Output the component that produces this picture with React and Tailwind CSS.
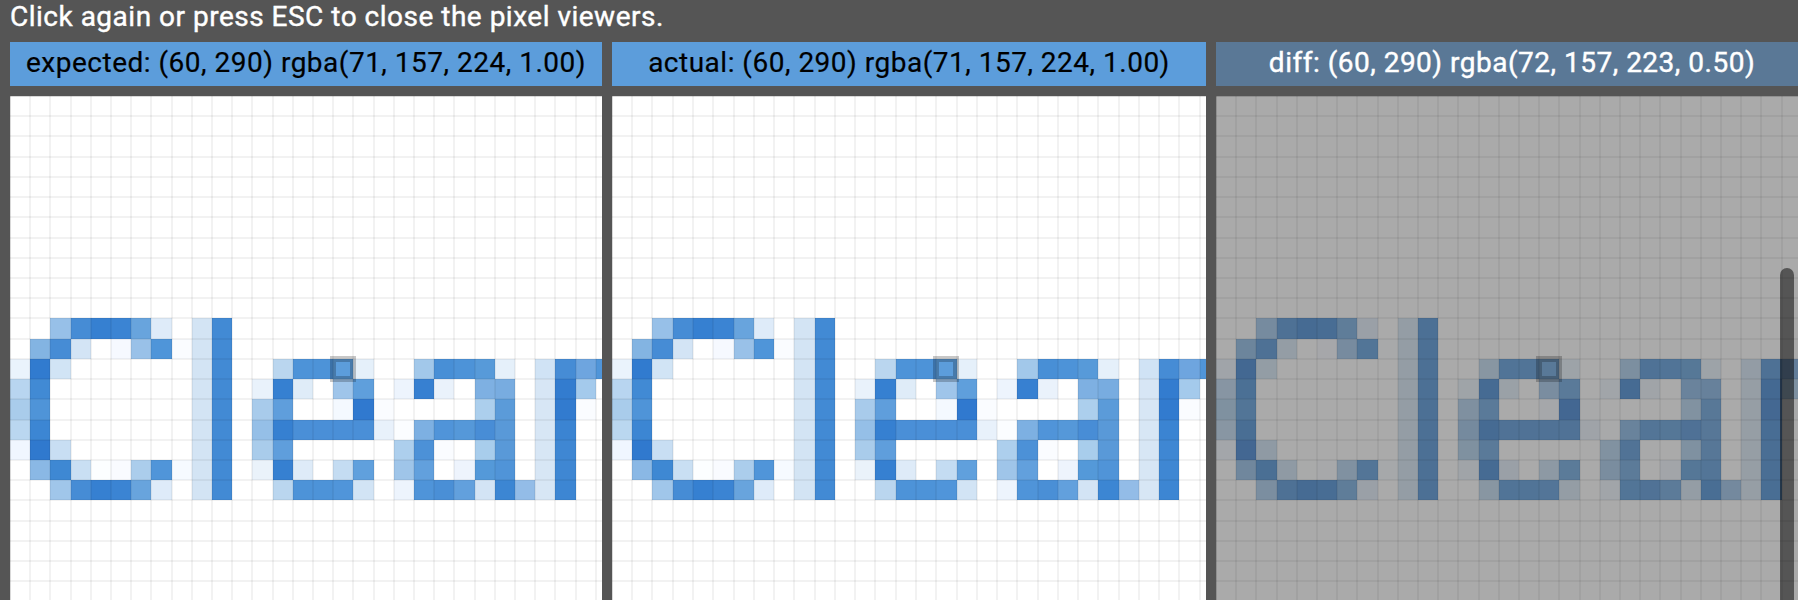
const X1 = [0,20,40,61,81,101,121,141,162,182,202,222,242,263,283,303,323,343,364,384,404,424,444,465,485,505,525,545,566,586,606];
const X2 = [0,20,40,61,81,101,122,142,162,182,203,223,243,263,284,304,324,345,365,385,405,426,446,466,486,507,527,547,567,588,608];
const X3 = [0,20,40,61,81,101,121,141,162,182,202,222,242,263,283,303,323,343,364,384,404,424,444,465,485,505,525,545,566,586,606];
const Y = Array.from({ length: 26 }, (_, i) => Math.round(i * 20.22));
const FIRST_ROW = 11;

const _ = null;
const PIXELS = [
  [_,_,'97c0e8','468cd5','3680d1','3b84d3','68a4dd','deebf9',_,'d3e4f4','428ad4'],
  [_,'83b4e2','468cd5','d3e4f5',_,'f6f9ff','99c1e8','4f95d9','fafcff','d3e4f4','428ad4'],
  ['eaf3fc','317bcf','d1e4f5',_,_,_,_,_,_,'d3e4f4','428ad4',_,_,'bad6ef','4d93d8','4d93d8','5c9ddb','e5f0fa',_,_,'a2c8ea','488fd6','4d93d8','579ad9','e5f0fa',_,'d0e3f5','468cd5','6ea5df','5095d9'],
  ['b8d5f0','418ad4',_,_,_,_,_,_,_,'d3e4f4','428ad4',_,'e9f2fb','3680d1','dfecf8',_,'9fc5ea','5f9fdc',_,'edf4fd','3780d1','eaf2fb',_,'7eb0e2','78ace0',_,'d7e6f5','337ccf','a4caec',_],
  ['a9cceb','4f94d8',_,_,_,_,_,_,_,'d3e4f4','428ad4',_,'a8cbeb','5f9edc',_,_,'f4f9ff','3079cf','fafcff',_,_,_,_,'accfed','5b9bd9',_,'d7e6f5','327bcf','fafcff',_],
  ['bad7f0','3c86d3',_,_,_,_,_,_,_,'d3e4f4','428ad4',_,'95bfe7','3680d1','4a8fd7','4a8fd7','4a8fd7','4a8fd7','e8f1fb','fbfdff','7db0e2','5094d9','5598d9','488dd6','5999d8',_,'d7e6f5','3b84d2',_,_],
  ['f0f6ff','3079ce','c8def3',_,_,_,_,_,_,'d3e4f4','428ad4',_,'a9cceb','5f9edc',_,_,_,_,_,'adcfed','4c91d7','fafcff',_,'a8cdec','5999d8',_,'d7e6f5','3f87d3',_,_],
  [_,'8ab8e5','3e88d3','c9dff3','fcfeff','f9fbff','abcdec','5095d9','f6faff','d3e4f4','428ad4',_,'eaf2fa','3680d1','deebf8',_,'c4dcf2','60a0dd',_,'9fc5e9','62a0dd',_,'eef4fd','5499d9','5094d8',_,'d7e6f5','3f87d3',_,_],
  [_,_,'a0c6ea','468cd5','3680d1','3b84d3','68a4dd','deebf9',_,'d3e4f4','428ad4',_,_,'bad6ef','4d93d8','4d93d8','5095da','d2e4f5',_,'edf4fd','4f94d9','4a8fd6','62a0dd','d3e4f5','3c86d3','93bce7','d7e6f5','3d86d3',_,_],
];

function tone(hex, dim) {
  if (!dim) return '#' + hex;
  const [r, g, b] = [0, 2, 4].map((i) => parseInt(hex.slice(i, i + 2), 16));
  const f = (v) => Math.round(v * 0.5 + 42.5);
  return `rgb(${f(r)},${f(g)},${f(b)})`;
}

function PixelCanvas({ xs, width, dim }) {
  const cx = xs[16];
  const cy = Y[13];
  return (
    <svg width={width} height="504" shapeRendering="crispEdges" className="block">
      <rect width={width} height="504" fill={dim ? '#aaaaaa' : '#ffffff'} />
      {PIXELS.map((row, r) =>
        row.map((c, i) => {
          const y = Y[FIRST_ROW + r];
          return c && (
            <rect key={`${r}-${i}`} x={xs[i]} y={y} width={xs[i + 1] - xs[i]} height={Y[FIRST_ROW + r + 1] - y} fill={tone(c, dim)} />
          );
        })
      )}
      {xs.map((x) => <rect key={x} x={x - 1} y="0" width="2" height="504" fill="#000" fillOpacity="0.05" />)}
      {Y.map((y) => <rect key={y} x="0" y={y - 1} width={width} height="2" fill="#000" fillOpacity="0.05" />)}
      <rect width={width} height="1" fill="#000" fillOpacity="0.1" />
      <rect width="1" height="504" fill="#000" fillOpacity="0.1" />
      <rect x={cx} y={cy} width="20" height="20" fill="none" stroke="#000" strokeOpacity="0.22" strokeWidth="6" />
    </svg>
  );
}

function Viewer({ label, xs, width, dim, className, labelClass }) {
  return (
    <section className={`flex shrink-0 flex-col gap-[10px] overflow-hidden ${className}`}>
      <div className={`flex h-11 items-center justify-center whitespace-nowrap pb-[2px] text-[28px] leading-none tracking-[0.5px] ${labelClass}`}>{label}</div>
      <PixelCanvas xs={xs} width={width} dim={dim} />
    </section>
  );
}

export default function App() {
  return (
    <main className="relative h-[600px] w-full overflow-hidden bg-[#555555] font-['Roboto',sans-serif]">
      <p className="h-[42px] whitespace-nowrap pl-[10px] text-[28px] leading-[33px] tracking-[0.5px] text-white [-webkit-text-stroke:0.4px_white]">
        Click again or press ESC to close the pixel viewers.
      </p>
      <div className="flex gap-[10px] pl-[10px]">
        <Viewer label="expected: (60, 290) rgba(71, 157, 224, 1.00)" xs={X1} width={592} className="w-[592px]" labelClass="bg-[#5c9ddb] text-black [-webkit-text-stroke:0.2px_black]" />
        <Viewer label="actual: (60, 290) rgba(71, 157, 224, 1.00)" xs={X2} width={594} className="w-[594px]" labelClass="bg-[#5c9ddb] text-black [-webkit-text-stroke:0.2px_black]" />
        <Viewer label="diff: (60, 290) rgba(72, 157, 223, 0.50)" xs={X3} width={592} dim className="w-[592px]" labelClass="bg-[#5a7896] text-white [-webkit-text-stroke:0.4px_white]" />
      </div>
      <div className="absolute left-[1780px] top-[268px] h-[360px] w-[14px] rounded-full bg-black/50" />
    </main>
  );
}
